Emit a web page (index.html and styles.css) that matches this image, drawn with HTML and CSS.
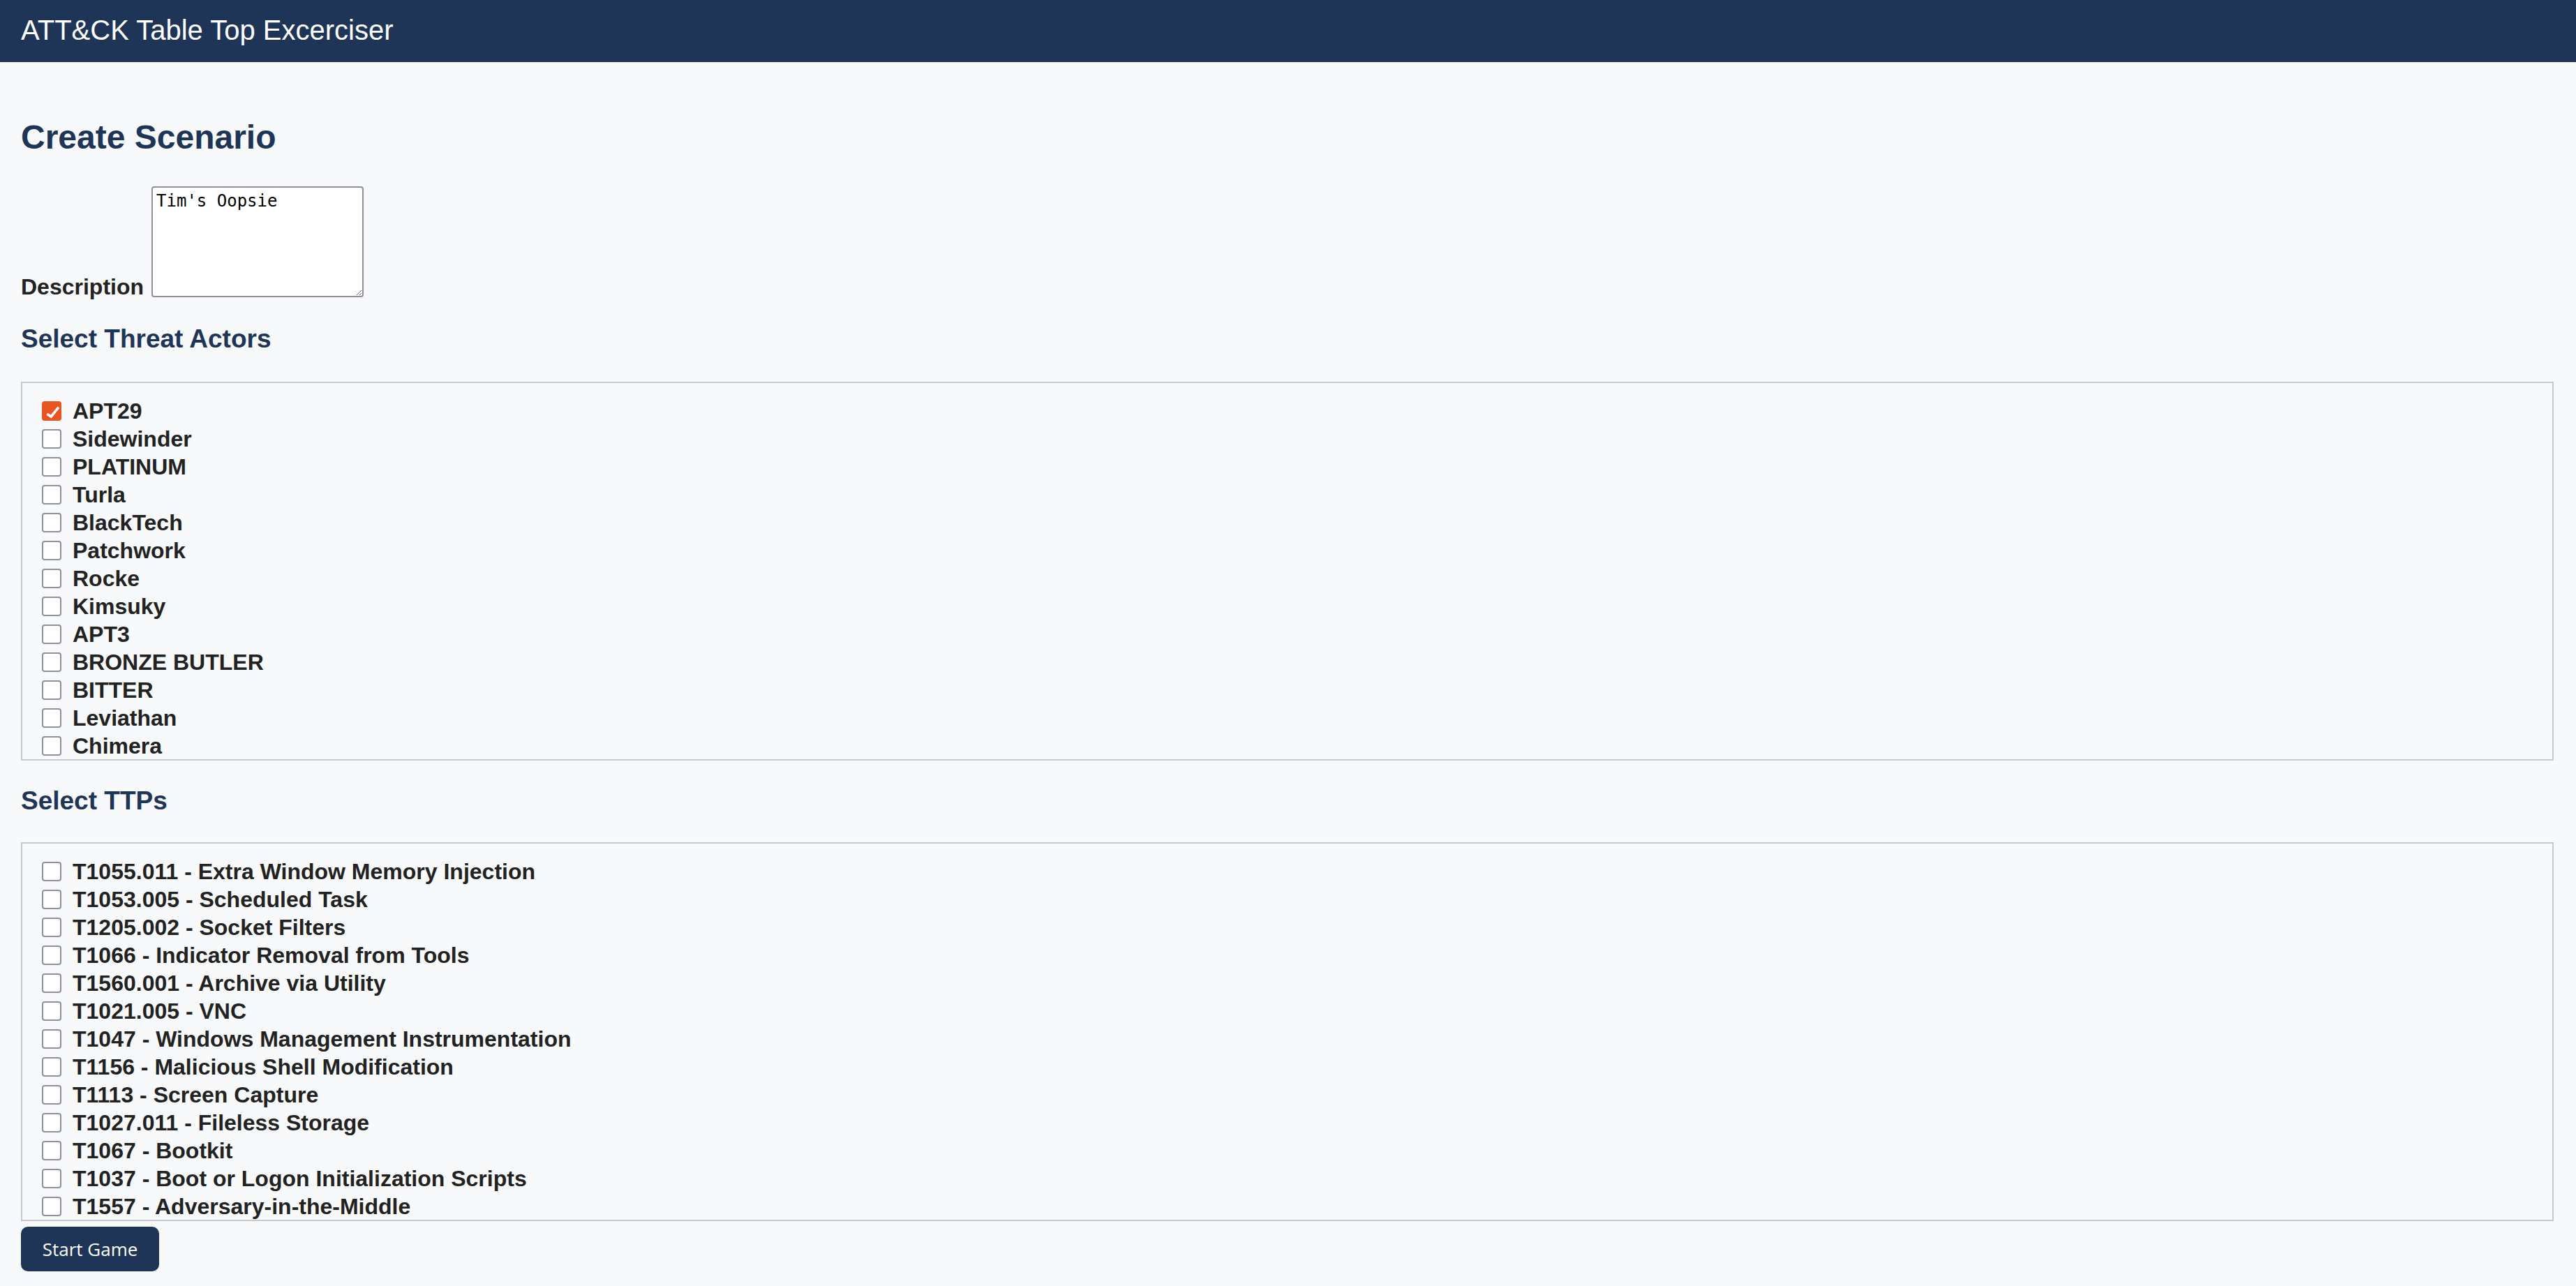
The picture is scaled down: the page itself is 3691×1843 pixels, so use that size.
FILE: index.html
```html
<!DOCTYPE html>
<html lang="en">
<head>
<meta charset="utf-8">
<title>ATT&amp;CK Table Top Excerciser</title>
<link rel="stylesheet" href="styles.css">
</head>
<body>
<header class="topbar">
  <h1 class="brand">ATT&amp;CK Table Top Excerciser</h1>
</header>
<main class="page">
  <h2 class="page-title">Create Scenario</h2>
  <div class="desc-row">
    <label class="desc-label" for="desc">Description</label>
    <textarea id="desc" class="desc-input" spellcheck="true">Tim's Oopsie</textarea>
  </div>

  <h3 class="section-title section-title--first">Select Threat Actors</h3>
  <div class="pick-box">
    <label class="pick"><input type="checkbox" checked><span>APT29</span></label>
    <label class="pick"><input type="checkbox"><span>Sidewinder</span></label>
    <label class="pick"><input type="checkbox"><span>PLATINUM</span></label>
    <label class="pick"><input type="checkbox"><span>Turla</span></label>
    <label class="pick"><input type="checkbox"><span>BlackTech</span></label>
    <label class="pick"><input type="checkbox"><span>Patchwork</span></label>
    <label class="pick"><input type="checkbox"><span>Rocke</span></label>
    <label class="pick"><input type="checkbox"><span>Kimsuky</span></label>
    <label class="pick"><input type="checkbox"><span>APT3</span></label>
    <label class="pick"><input type="checkbox"><span>BRONZE BUTLER</span></label>
    <label class="pick"><input type="checkbox"><span>BITTER</span></label>
    <label class="pick"><input type="checkbox"><span>Leviathan</span></label>
    <label class="pick"><input type="checkbox"><span>Chimera</span></label>
  </div>

  <h3 class="section-title section-title--second">Select TTPs</h3>
  <div class="pick-box pick-box--ttp">
    <label class="pick"><input type="checkbox"><span>T1055.011 - Extra Window Memory Injection</span></label>
    <label class="pick"><input type="checkbox"><span>T1053.005 - Scheduled Task</span></label>
    <label class="pick"><input type="checkbox"><span>T1205.002 - Socket Filters</span></label>
    <label class="pick"><input type="checkbox"><span>T1066 - Indicator Removal from Tools</span></label>
    <label class="pick"><input type="checkbox"><span>T1560.001 - Archive via Utility</span></label>
    <label class="pick"><input type="checkbox"><span>T1021.005 - VNC</span></label>
    <label class="pick"><input type="checkbox"><span>T1047 - Windows Management Instrumentation</span></label>
    <label class="pick"><input type="checkbox"><span>T1156 - Malicious Shell Modification</span></label>
    <label class="pick"><input type="checkbox"><span>T1113 - Screen Capture</span></label>
    <label class="pick"><input type="checkbox"><span>T1027.011 - Fileless Storage</span></label>
    <label class="pick"><input type="checkbox"><span>T1067 - Bootkit</span></label>
    <label class="pick"><input type="checkbox"><span>T1037 - Boot or Logon Initialization Scripts</span></label>
    <label class="pick"><input type="checkbox"><span>T1557 - Adversary-in-the-Middle</span></label>
  </div>

  <button class="start-btn" type="button">Start Game</button>
</main>
</body>
</html>
```

FILE: styles.css
```css
* {
  box-sizing: border-box;
}

html, body {
  margin: 0;
  padding: 0;
}

body {
  background: #f7f9fb;
  color: #222222;
  font-family: "Liberation Sans", Arial, sans-serif;
  height: 1843px;
  overflow: hidden;
}

.topbar {
  background: #1e3557;
  height: 89px;
  padding: 20px 30px 0;
}

.brand {
  margin: 0;
  font-size: 40px;
  line-height: 46px;
  font-weight: 400;
  color: #ffffff;
}

.page {
  padding: 0 32px 0 30px;
}

.page-title {
  margin: 80px 0 0;
  font-size: 48px;
  line-height: 55px;
  font-weight: 700;
  color: #1e3557;
}

.desc-row {
  margin-top: 43px;
  display: flex;
  align-items: flex-end;
  gap: 11px;
}

.desc-label {
  font-size: 32px;
  line-height: 36px;
  font-weight: 700;
  color: #222222;
  margin-bottom: -3px;
}

.desc-input {
  display: block;
  width: 304px;
  height: 159px;
  margin: 0;
  padding: 5px;
  border: 2px solid #8f8f9d;
  border-radius: 4px;
  background: #ffffff;
  color: #000000;
  font-family: "DejaVu Sans Mono", "Liberation Mono", monospace;
  font-size: 24px;
  line-height: normal;
  resize: both;
  outline: none;
}

.section-title {
  margin: 0;
  font-size: 37px;
  line-height: 42px;
  font-weight: 700;
  color: #1e3557;
}

.section-title--first {
  margin-top: 39px;
}

.section-title--second {
  margin-top: 37px;
}

.pick-box {
  margin-top: 40px;
  height: 543px;
  border: 2px solid #c8c9cc;
  padding: 20px 28px 0;
  overflow: auto;
  scrollbar-width: none;
  display: flex;
  flex-direction: column;
}

.pick-box::-webkit-scrollbar {
  display: none;
}

.pick-box--ttp {
  margin-top: 38px;
}

.pick {
  display: flex;
  align-items: center;
  gap: 16px;
  height: 40px;
  flex: 0 0 40px;
  font-size: 32px;
  line-height: 40px;
  font-weight: 700;
  color: #222222;
  white-space: nowrap;
}

.pick input {
  appearance: none;
  -webkit-appearance: none;
  position: relative;
  flex: 0 0 28px;
  width: 28px;
  height: 28px;
  margin: 0;
  border: 2px solid #8f8f9d;
  border-radius: 4px;
  background: #ffffff;
}

.pick input:checked {
  background: #e95420;
  border-color: #e95420;
}

.pick input:checked::after {
  content: "";
  position: absolute;
  left: -2px;
  top: -2px;
  width: 28px;
  height: 28px;
  background: #ffffff;
  clip-path: polygon(8.2px 16.8px, 12.9px 19.6px, 22.6px 7.6px, 25.4px 9.8px, 13.7px 24.4px, 6.4px 19.8px);
}

.start-btn {
  display: block;
  margin-top: 8px;
  width: 198px;
  height: 64px;
  padding: 0;
  border: none;
  border-radius: 10px;
  background: #1e3557;
  color: #ffffff;
  font-family: "Open Sans", "Noto Sans", sans-serif;
  font-size: 26px;
  font-weight: 400;
  text-align: center;
}
```
